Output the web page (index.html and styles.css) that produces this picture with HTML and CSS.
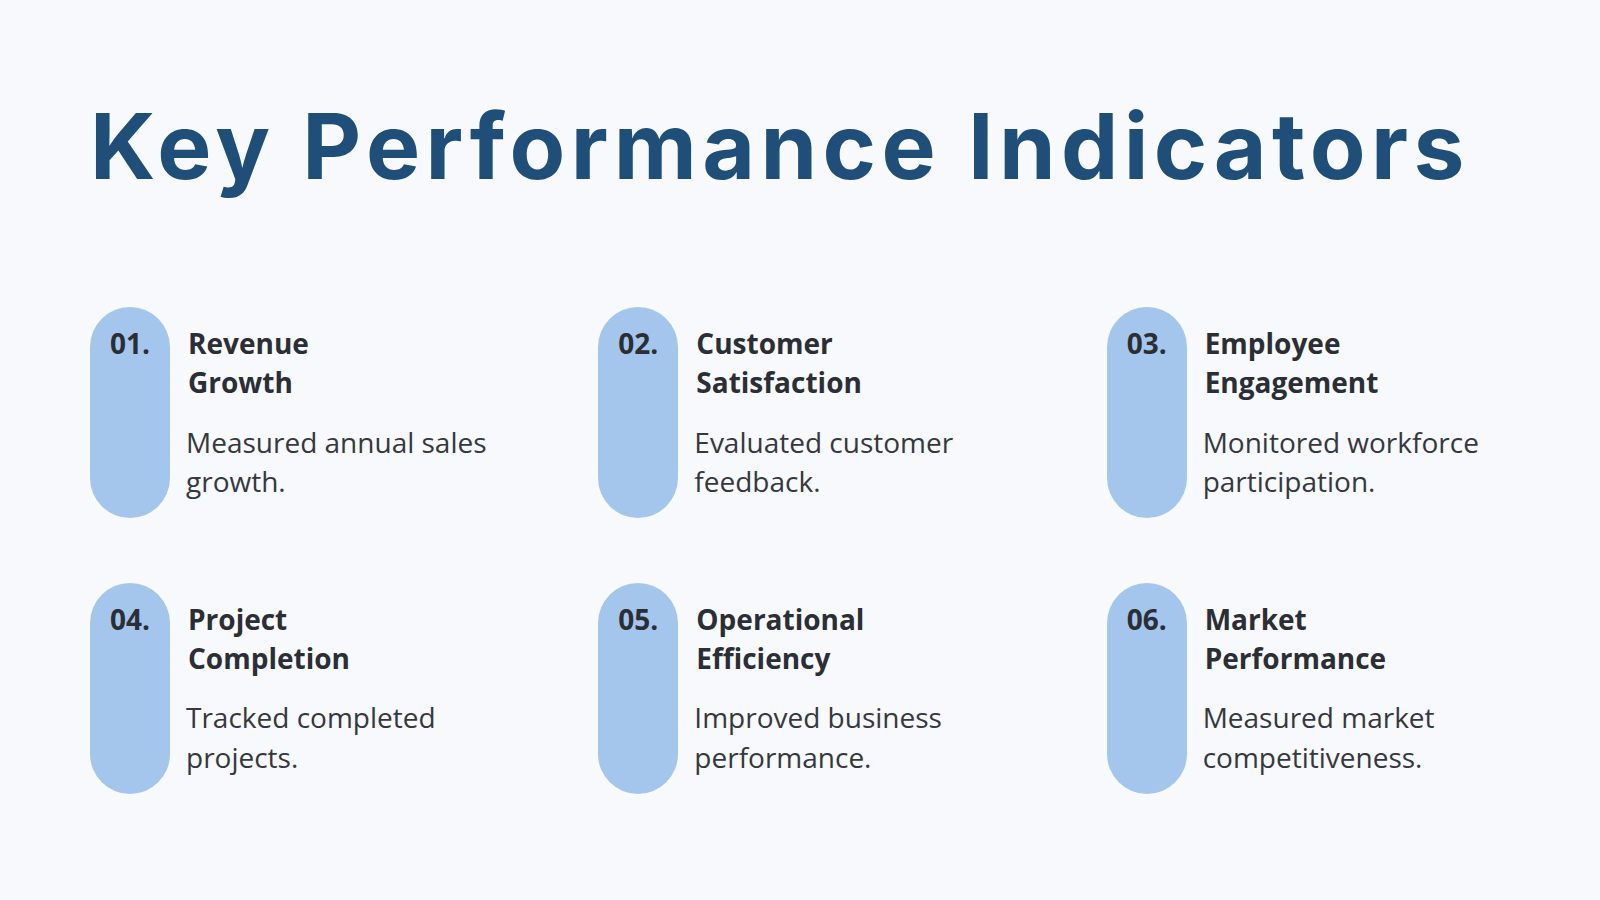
FILE: index.html
```html
<!DOCTYPE html>
<html lang="en">
<head>
<meta charset="utf-8">
<title>Key Performance Indicators</title>
<link rel="stylesheet" href="styles.css">
</head>
<body>
<main class="slide">
  <h1 class="title">Key Performance Indicators</h1>
  <section class="kpi-grid">
    <article class="kpi">
      <div class="kpi-num">01.</div>
      <div class="kpi-body">
        <h2 class="kpi-title">Revenue Growth</h2>
        <p class="kpi-desc">Measured annual sales growth.</p>
      </div>
    </article>
    <article class="kpi">
      <div class="kpi-num">02.</div>
      <div class="kpi-body">
        <h2 class="kpi-title">Customer Satisfaction</h2>
        <p class="kpi-desc">Evaluated customer feedback.</p>
      </div>
    </article>
    <article class="kpi">
      <div class="kpi-num">03.</div>
      <div class="kpi-body">
        <h2 class="kpi-title">Employee Engagement</h2>
        <p class="kpi-desc">Monitored workforce participation.</p>
      </div>
    </article>
    <article class="kpi">
      <div class="kpi-num">04.</div>
      <div class="kpi-body">
        <h2 class="kpi-title">Project Completion</h2>
        <p class="kpi-desc">Tracked completed projects.</p>
      </div>
    </article>
    <article class="kpi">
      <div class="kpi-num">05.</div>
      <div class="kpi-body">
        <h2 class="kpi-title">Operational Efficiency</h2>
        <p class="kpi-desc">Improved business performance.</p>
      </div>
    </article>
    <article class="kpi">
      <div class="kpi-num">06.</div>
      <div class="kpi-body">
        <h2 class="kpi-title">Market Performance</h2>
        <p class="kpi-desc">Measured market competitiveness.</p>
      </div>
    </article>
  </section>
</main>
</body>
</html>
```

FILE: styles.css
```css
* {
  box-sizing: border-box;
}

html, body {
  margin: 0;
  padding: 0;
  background: #f7f9fc;
}

body {
  font-family: "Open Sans", "Noto Sans", sans-serif;
  color: #2b2e34;
}

.slide {
  width: 1600px;
  height: 900px;
  padding: 92px 90px 0 90px;
}

.title {
  margin: 0;
  font-family: "Inter", "DejaVu Sans", sans-serif;
  font-weight: 700;
  font-size: 91px;
  line-height: 1.2;
  color: #1f4e79;
  letter-spacing: 5.4px;
  white-space: nowrap;
}

.kpi-grid {
  margin-top: 106px;
  display: grid;
  grid-template-columns: repeat(3, 1fr);
  column-gap: 105px;
  row-gap: 65px;
}

.kpi {
  display: flex;
  align-items: stretch;
  gap: 16px;
}

.kpi-num {
  flex: 0 0 80px;
  width: 80px;
  border-radius: 40px;
  background: #a4c6ec;
  padding: 17px 0;
  text-align: center;
  font-size: 28px;
  line-height: 1.4;
  font-weight: 700;
  color: #2b2e34;
}

.kpi-body {
  padding: 17px 0;
  min-width: 0;
}

.kpi-title {
  margin: 0 0 20px 2px;
  max-width: 200px;
  font-size: 28px;
  line-height: 1.4;
  font-weight: 700;
  color: #2b2e34;
}

.kpi-desc {
  margin: 0;
  font-size: 28px;
  line-height: 1.4;
  font-weight: 400;
  color: #35383e;
}
```
